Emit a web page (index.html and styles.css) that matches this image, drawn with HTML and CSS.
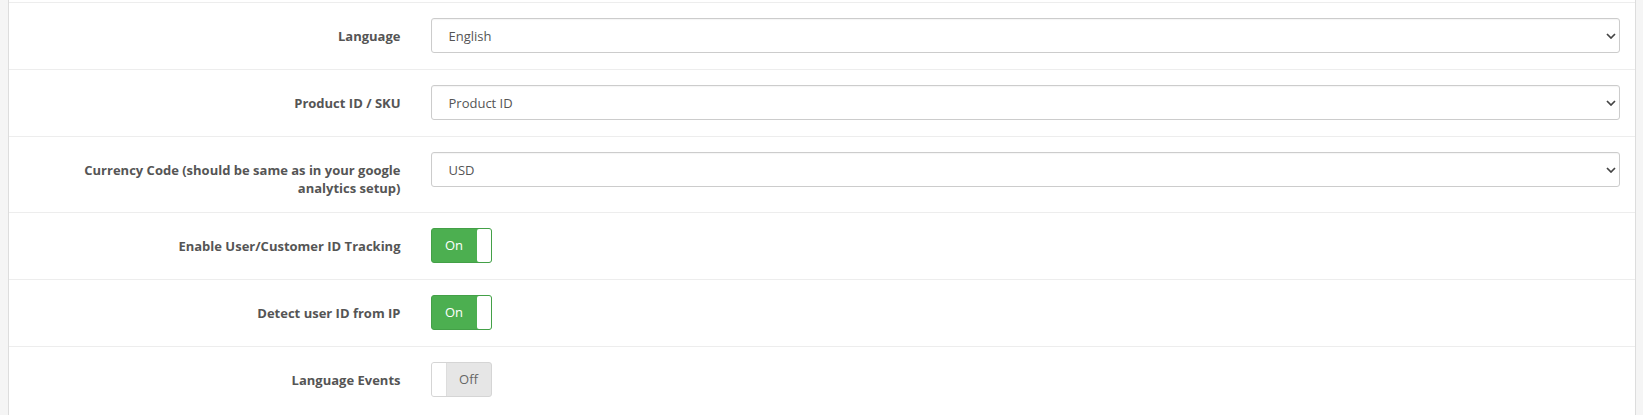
FILE: index.html
```html
<!DOCTYPE html>
<html lang="en">
<head>
    <meta charset="UTF-8" />
    <meta name="viewport" content="width=device-width, initial-scale=1" />
    <title>Analytics Settings</title>
    <link rel="stylesheet" href="styles.css">
</head>
<body>
    <div class="panel">
        <form class="settings">
            <div class="form-group">
                <label class="control-label" for="input-language">Language</label>
                <div class="control">
                    <div class="select-wrap">
                        <select id="input-language" class="form-control">
                            <option selected>English</option>
                        </select>
                        <svg class="chevron" width="10" height="6" viewBox="0 0 10 6"><path d="M1 1l4 4 4-4" fill="none" stroke="#444" stroke-width="1.7"/></svg>
                    </div>
                </div>
            </div>

            <div class="form-group">
                <label class="control-label" for="input-product-id">Product ID / SKU</label>
                <div class="control">
                    <div class="select-wrap">
                        <select id="input-product-id" class="form-control">
                            <option selected>Product ID</option>
                            <option>SKU</option>
                        </select>
                        <svg class="chevron" width="10" height="6" viewBox="0 0 10 6"><path d="M1 1l4 4 4-4" fill="none" stroke="#444" stroke-width="1.7"/></svg>
                    </div>
                </div>
            </div>

            <div class="form-group">
                <label class="control-label" for="input-currency">Currency Code (should be same as in your google analytics setup)</label>
                <div class="control">
                    <div class="select-wrap">
                        <select id="input-currency" class="form-control">
                            <option selected>USD</option>
                        </select>
                        <svg class="chevron" width="10" height="6" viewBox="0 0 10 6"><path d="M1 1l4 4 4-4" fill="none" stroke="#444" stroke-width="1.7"/></svg>
                    </div>
                </div>
            </div>

            <div class="form-group">
                <label class="control-label">Enable User/Customer ID Tracking</label>
                <div class="control">
                    <span class="switch on"><span class="switch-label">On</span><span class="switch-knob"></span></span>
                </div>
            </div>

            <div class="form-group">
                <label class="control-label">Detect user ID from IP</label>
                <div class="control">
                    <span class="switch on"><span class="switch-label">On</span><span class="switch-knob"></span></span>
                </div>
            </div>

            <div class="form-group">
                <label class="control-label">Language Events</label>
                <div class="control">
                    <span class="switch off"><span class="switch-knob"></span><span class="switch-label">Off</span></span>
                </div>
            </div>
        </form>
    </div>
</body>
</html>
```

FILE: styles.css
```css
/* Settings panel */
body {
    margin: 0;
    background: #f5f5f5;
    font-family: 'Open Sans', sans-serif;
    font-size: 13px;
    color: #555;
}
.panel {
    margin: 0 7px 0 8px;
    background: #fff;
    border-left: 1px solid #ddd;
    border-right: 1px solid #ddd;
    padding-top: 2px;
    min-height: 413px;
}
.form-group {
    display: grid;
    grid-template-columns: 25% 75%;
    padding: 15px 0;
    border-top: 1px solid #ededed;
}
.form-group:last-child {
    border-bottom: 1px solid #ededed;
}
.control-label {
    padding: 9px 15px 0;
    text-align: right;
    font-weight: 700;
    font-size: 13px;
    line-height: 18px;
    color: #555;
}
.control {
    padding: 0 15px;
    min-height: 36px;
}
.select-wrap {
    position: relative;
}
.form-control {
    display: block;
    width: 100%;
    height: 35px;
    box-sizing: border-box;
    padding: 0 30px 0 17px;
    border: 1px solid #ccc;
    border-radius: 3px;
    background: #fff;
    font-family: 'Open Sans', sans-serif;
    font-size: 13px;
    color: #555;
    -webkit-appearance: none;
    appearance: none;
    box-shadow: inset 0 1px 1px rgb(0 0 0 / 0.04);
}
.chevron {
    position: absolute;
    right: 4px;
    top: 15px;
    pointer-events: none;
}
.switch {
    display: inline-flex;
    width: 61px;
    height: 35px;
    box-sizing: border-box;
    border-radius: 3px;
    overflow: hidden;
    line-height: 33px;
}
.switch.on {
    background: #4caf50;
    border: 1px solid #43a047;
}
.switch.off {
    background: #e6e6e6;
    border: 1px solid #d5d5d5;
}
.switch-label {
    flex: 1;
    text-align: center;
    font-size: 13px;
}
.switch.on .switch-label {
    color: #fff;
}
.switch.off .switch-label {
    color: #666;
}
.switch-knob {
    width: 14px;
    background: #fff;
}
.switch.on .switch-knob {
    border-radius: 2px 0 0 2px;
}
.switch.off .switch-knob {
    border-right: 1px solid #ddd;
}
```
